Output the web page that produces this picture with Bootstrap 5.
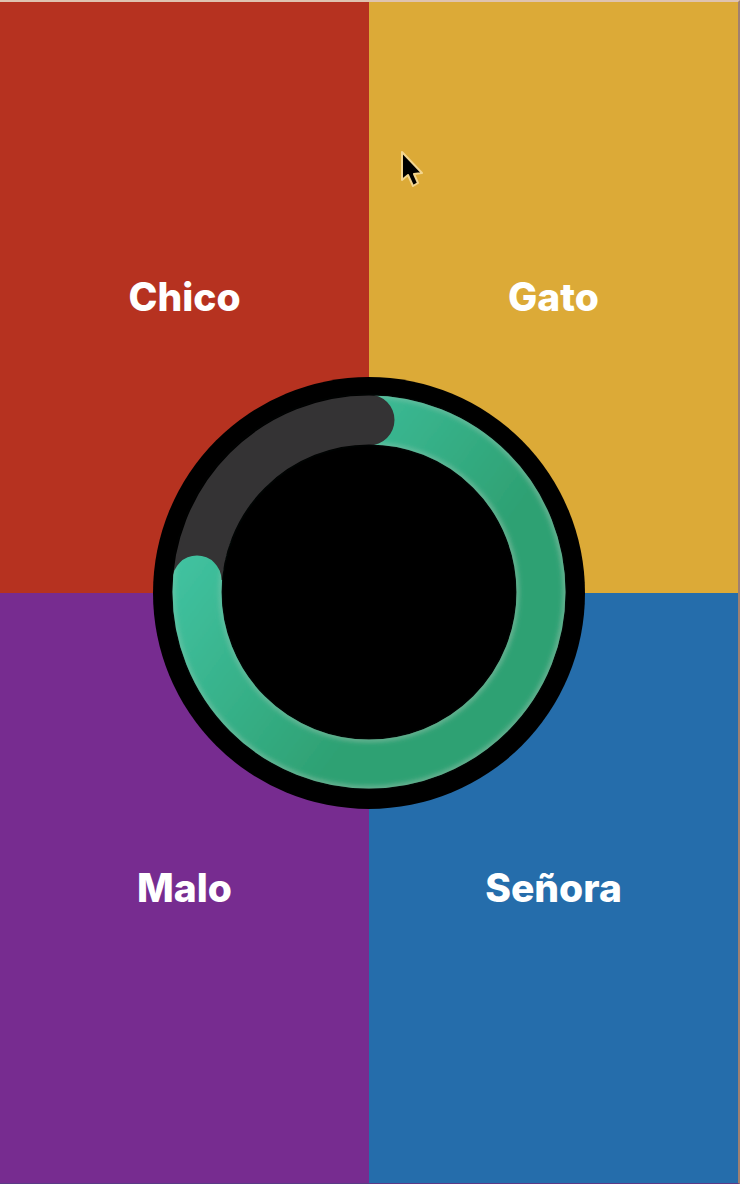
<!DOCTYPE html>
<html lang="es">
<head>
<meta charset="utf-8">
<meta name="viewport" content="width=device-width, initial-scale=1">
<title>Quiz</title>
<link rel="stylesheet" href="https://cdn.jsdelivr.net/npm/bootstrap@5.3.0/dist/css/bootstrap.min.css">
<style>
  .board { border: 2px solid #a08070; border-top-color: #dfc3b0; border-left: 0; border-bottom: 1px solid #5c3a86; }
  .answer {
    color: #fff; border: 0;
    font: 800 39px/48px Inter, "Liberation Sans", sans-serif;
  }
  .answer-red { background: #b63220; }
  .answer-yellow { background: #dcaa37; }
  .answer-purple { background: #772c90; }
  .answer-blue { background: #256dab; }
  .dial { width: 434px; max-width: 90vw; pointer-events: none; }
  .pointer { left: 399px; top: 147px; width: 26px; height: 42px; pointer-events: none; }
</style>
</head>
<body>
<main class="board position-relative vh-100 d-flex flex-column">
  <div class="row g-0 flex-fill">
    <button type="button" class="answer answer-red col-6">Chico</button>
    <button type="button" class="answer answer-yellow col-6">Gato</button>
  </div>
  <div class="row g-0 flex-fill">
    <button type="button" class="answer answer-purple col-6">Malo</button>
    <button type="button" class="answer answer-blue col-6">Señora</button>
  </div>

  <!-- countdown dial -->
  <svg class="dial position-absolute top-50 start-50 translate-middle" viewBox="0 0 434 434" role="img" aria-label="Tiempo restante">
    <defs>
      <linearGradient id="green" gradientUnits="userSpaceOnUse" x1="60" y1="150" x2="250" y2="290">
        <stop offset="0" stop-color="#40c19f"/>
        <stop offset="1" stop-color="#2ea173"/>
      </linearGradient>
      <linearGradient id="rim" gradientUnits="userSpaceOnUse" x1="60" y1="150" x2="250" y2="290">
        <stop offset="0" stop-color="#5bc4a5"/>
        <stop offset="1" stop-color="#62b18f"/>
      </linearGradient>
      <filter id="soft" x="-10%" y="-10%" width="120%" height="120%"><feGaussianBlur stdDeviation="2"/></filter>
      <mask id="remaining" maskUnits="userSpaceOnUse" x="0" y="0" width="434" height="434">
        <rect width="434" height="434" fill="#fff"/>
        <path d="M45 204A172 172 0 0 1 217 44" fill="none" stroke="#000" stroke-width="51" stroke-linecap="round"/>
        <circle cx="45" cy="204" r="24.5" fill="#fff"/>
        <rect x="18" y="204" width="54" height="40" fill="#fff"/>
      </mask>
    </defs>
    <circle cx="217" cy="217" r="216" fill="#000"/>
    <g fill="none">
      <circle cx="217" cy="216" r="172" stroke="#343334" stroke-width="49"/>
      <g mask="url(#remaining)">
        <circle cx="217" cy="216" r="172" stroke="url(#rim)" stroke-width="49"/>
        <circle cx="217" cy="216" r="172" stroke="url(#green)" stroke-width="43" filter="url(#soft)"/>
      </g>
    </g>
  </svg>

  <svg class="pointer position-absolute" viewBox="0 0 26 42" aria-hidden="true">
    <path d="M3 3V31L9 26L14 37L19 34L15 25L23 24Z" fill="#000" stroke="#f3d58e" stroke-width="2" stroke-linejoin="round"/>
  </svg>
</main>
<script src="https://cdn.jsdelivr.net/npm/bootstrap@5.3.0/dist/js/bootstrap.bundle.min.js"></script>
</body>
</html>
